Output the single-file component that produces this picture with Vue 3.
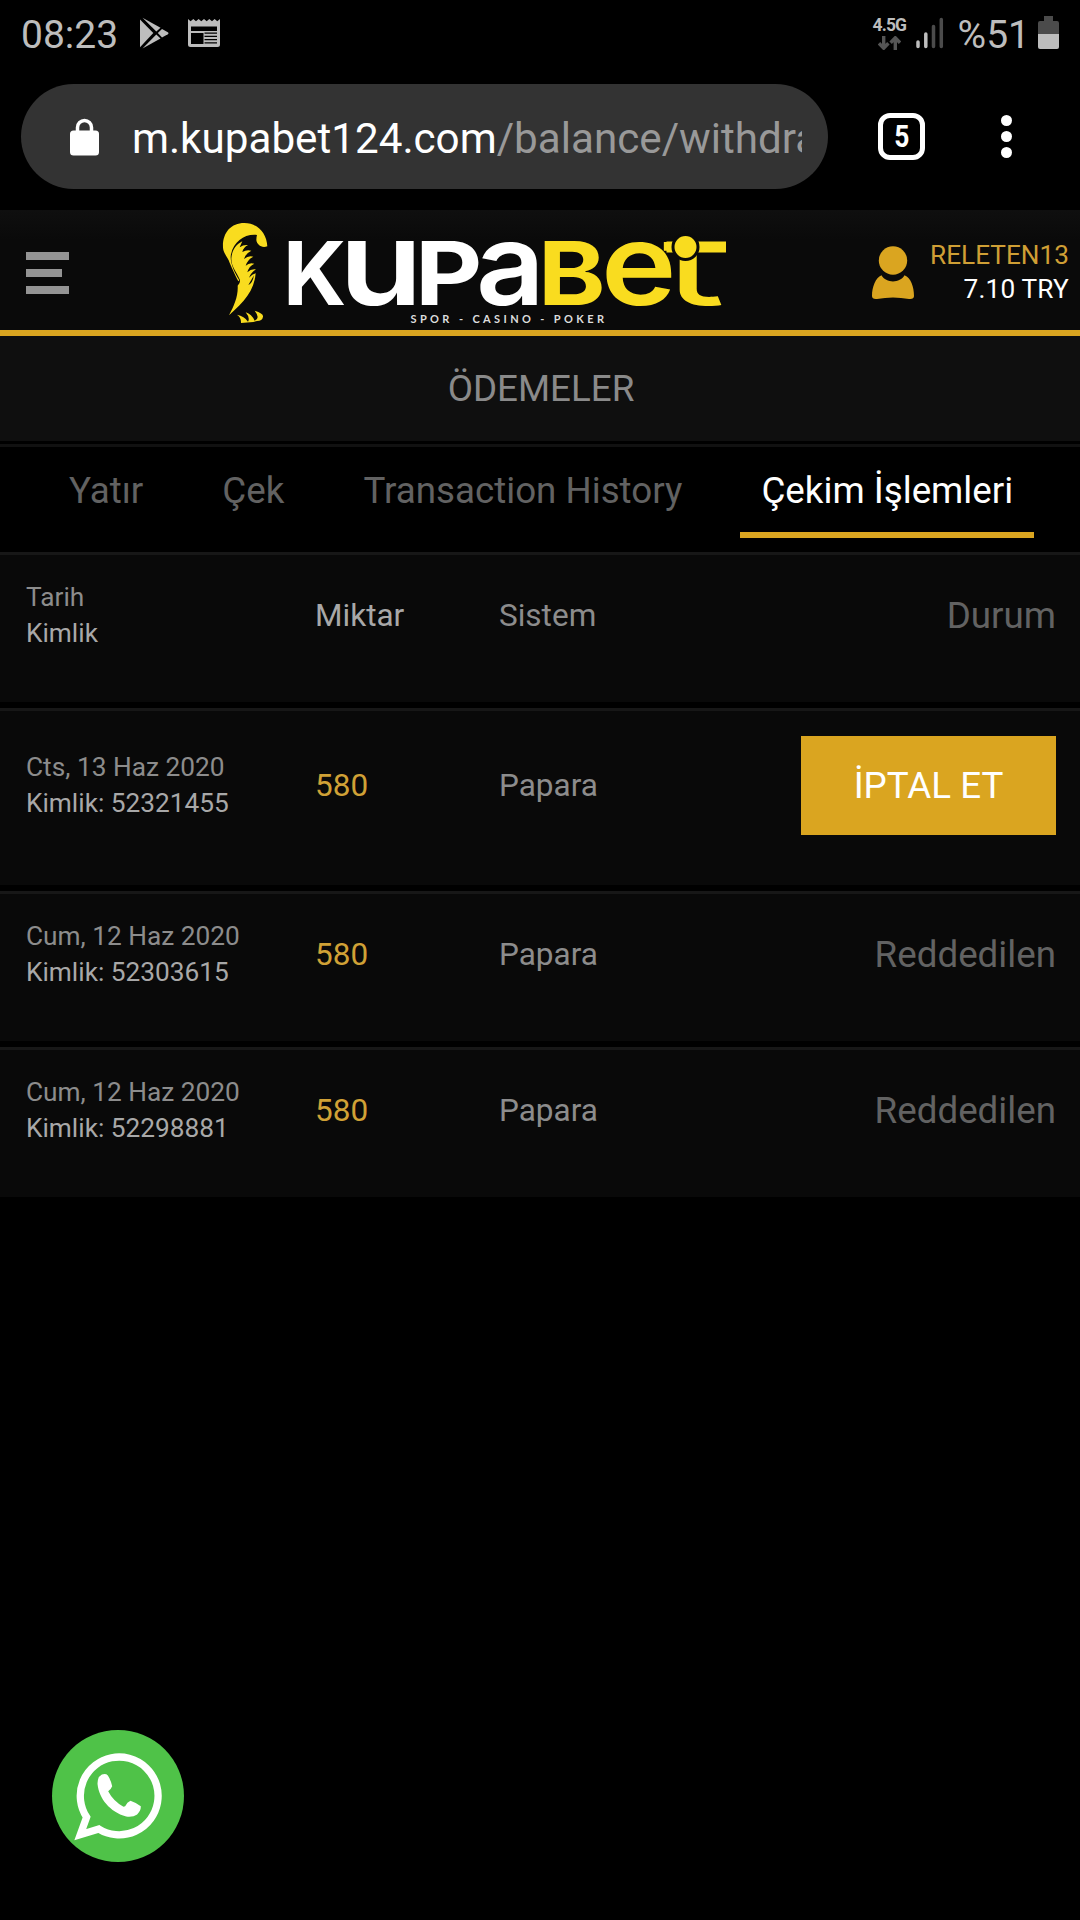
<template>
  <div class="screen">
    <div class="status-bar">
      <span class="clock">08:23</span>
      <svg class="play-icon" viewBox="0 0 29 32" width="29" height="32">
        <path d="M0 2.5 13.3 16 0 30.3Z" />
        <path d="M2.5 0.8 20.5 10.8 16.3 14.4Z" />
        <path d="M2.5 31.6 20.5 21.5 16.3 17.6Z" />
        <path d="M22 12 27.8 15.2Q29.2 16.2 27.8 17.2L22 20.5 17.8 16.1Z" />
      </svg>
      <svg class="news-icon" viewBox="0 0 32 29" width="32" height="29">
        <path
          fill-rule="evenodd"
          d="M0 0 2.6 2.2 5.3 0 8 2.2 10.6 0 13.3 2.2 16 0 18.7 2.2 21.3 0 24 2.2 26.6 0 29.3 2.2 32 0V25.5Q32 28 29.5 28H2.5Q0 28 0 25.5ZM3 7.5V12H29V7.5ZM3 14V25H15.5V14Z"
        />
        <path class="cut" d="M16.5 14.2H29M16.5 17.4H29M16.5 20.6H29M16.5 23.8H29" />
      </svg>
      <div class="status-right">
        <div class="network">
          <span>4.5G</span>
          <svg viewBox="0 0 23 14" width="23" height="14">
            <path d="M5.7 0V12M1 7.3 5.7 12.2 10.4 7.3M17.3 14V2M12.6 6.7 17.3 1.8 22 6.7" />
          </svg>
        </div>
        <svg class="signal" viewBox="0 0 28 32" width="28" height="32">
          <path class="on" d="M2 25V29.5M9.8 17V29.5" />
          <path d="M17.5 9.5V29.5M25.3 2.5V29.5" />
        </svg>
        <span class="percent">%51</span>
        <svg class="battery" viewBox="0 0 21 33" width="21" height="33">
          <path fill="#4b4b4b" d="M6 0H15V5H19Q21 5 21 7V18H0V7Q0 5 2 5H6Z" />
          <path d="M0 18H21V31Q21 33 19 33H2Q0 33 0 31Z" />
        </svg>
      </div>
    </div>

    <div class="browser-bar">
      <div class="url-pill">
        <svg viewBox="0 0 29 38" width="29" height="38">
          <path class="shackle" d="M7.5 14V9.5a7 7 0 0 1 14 0V14" />
          <rect y="12.5" width="29" height="25" rx="3.5" />
        </svg>
        <div class="url">m.kupabet124.com<span>/balance/withdrawals</span></div>
      </div>
      <div class="tab-count"><span>5</span></div>
      <div class="dots"><i></i><i></i><i></i></div>
    </div>

    <header class="header">
      <div class="burger"><i></i><i></i><i></i></div>
      <svg class="logo" viewBox="220 210 510 120" width="510" height="120">
        <defs>
          <clipPath id="wordmark">
            <rect x="270" y="240.5" width="460" height="70" />
          </clipPath>
        </defs>
        <g transform="translate(200 205) scale(.33333)">
          <path
            fill="#f9dc1f"
            d="M69 128C67 84 92 54 133 54C172 54 200 84 202 124C184 130 171 119 169 105Q169 96 171 90C135 86 102 108 93 148C88 170 104 205 118 226L115 229C105 210 91 179 86 166C78 150 70 142 69 128Z"
          />
          <path
            fill="#f9dc1f"
            d="M94 160C96 135 108 119 127 109L119 127Q131 118 144 120Q130 127 127 141Q140 133 154 137Q137 145 132 162Q145 151 160 155Q143 163 137 182Q149 171 163 176Q147 183 142 202Q154 190 168 193Q153 203 147 218Q157 208 167 205C163 257 132 291 87 331C103 302 115 272 113 242Q121 235 120 225C110 201 93 184 94 160Z"
          />
          <path fill="#0a0a0a" d="M162 211L145 240Q158 235 162 211Z" />
          <path
            fill="#f9dc1f"
            d="M111 329Q133 333 144 350Q151 339 137 322Q155 328 164 347Q182 340 164 317Q191 325 189 335Q187 348 171 348L160 351L123 354Q124 338 111 329Z"
          />
        </g>
        <g clip-path="url(#wordmark)">
          <text
            v-for="g in logoGlyphs"
            :key="g.char"
            :class="['glyph', g.tone]"
            :font-size="g.size"
            :font-weight="g.weight"
            :transform="`translate(${g.x} 305) scale(${g.scale} 1)`"
          >{{ g.char }}</text>
        </g>
        <rect class="yellow" x="666.5" y="241.5" width="59.5" height="11" />
        <circle class="ball" cx="685.5" cy="247" r="12.5" />
        <text class="tagline" x="410.5" y="323" textLength="193.5">SPOR - CASINO - POKER</text>
      </svg>
      <div class="account">
        <svg viewBox="0 0 42 54" width="42" height="54">
          <circle cx="21" cy="14.5" r="14.2" />
          <path d="M9.5 29.3C14 37.5 28 37.5 32.5 29.3C39 32 42 41 42 50Q42 53.5 37 53Q21 50 5 53Q0 53.5 0 50C0 41 3.5 32 9.5 29.3Z" />
        </svg>
        <div class="account-text">
          <div class="user">RELETEN13</div>
          <div class="balance">7.10 TRY</div>
        </div>
      </div>
    </header>

    <h1 class="title">ÖDEMELER</h1>

    <nav class="tabs">
      <a
        v-for="tab in tabs"
        :key="tab"
        :class="{ active: tab === activeTab }"
        @click="activeTab = tab"
      >{{ tab }}</a>
    </nav>

    <div class="list">
      <div
        v-for="row in rows"
        :key="row.id"
        :class="['row', { head: row.head, pending: row.pending }]"
      >
        <div class="date">
          {{ row.date }}
          <div class="id">{{ row.id }}</div>
        </div>
        <div class="amount">{{ row.amount }}</div>
        <div class="system">{{ row.system }}</div>
        <div class="state">
          <button v-if="row.pending">İPTAL ET</button>
          <template v-else>{{ row.state }}</template>
        </div>
      </div>
    </div>

    <svg class="whatsapp" viewBox="66 59 397 397" width="132" height="132">
      <circle cx="264.5" cy="257.5" r="198.5" fill="#4fc248" />
      <path
        class="bubble"
        d="M170 321A117 117 0 1 1 207 357L151 374Z"
      />
      <path
        fill="#fff"
        d="M216 193Q228 189 234 196Q244 212 247 228Q243 238 235 243Q249 271 281 290L286 288Q292 276 302 272Q319 278 333 288Q334 302 322 313Q309 322 289 319C240 305 208 266 203 222Q202 200 216 193Z"
      />
    </svg>
  </div>
</template>

<script setup>
import { ref } from 'vue'

/* LOGO LETTERS */
const logoGlyphs = [
  { char: 'K', x: 283, size: 88, weight: 700, scale: 1, tone: 'white' },
  { char: 'u', x: 339, size: 117, weight: 600, scale: 1.17, tone: 'white' },
  { char: 'P', x: 415, size: 88, weight: 700, scale: 1.18, tone: 'white' },
  { char: 'a', x: 476, size: 114, weight: 600, scale: 1.05, tone: 'white' },
  { char: 'B', x: 538, size: 88, weight: 700, scale: 1.16, tone: 'yellow' },
  { char: 'e', x: 601, size: 114, weight: 600, scale: 1.12, tone: 'yellow' },
  { char: 't', x: 662, size: 115, weight: 400, scale: 1.68, tone: 'yellow' },
]

/* TABS */
const tabs = ['Yatır', 'Çek', 'Transaction History', 'Çekim İşlemleri']
const activeTab = ref('Çekim İşlemleri')

/* ROWS */
const rows = [
  { head: true, date: 'Tarih', id: 'Kimlik', amount: 'Miktar', system: 'Sistem', state: 'Durum' },
  { date: 'Cts, 13 Haz 2020', id: 'Kimlik: 52321455', amount: '580', system: 'Papara', pending: true },
  { date: 'Cum, 12 Haz 2020', id: 'Kimlik: 52303615', amount: '580', system: 'Papara', state: 'Reddedilen' },
  { date: 'Cum, 12 Haz 2020', id: 'Kimlik: 52298881', amount: '580', system: 'Papara', state: 'Reddedilen' },
]
</script>

<style>
body {
  background: #000;
}
</style>

<style scoped>
.screen {
  position: relative;
  width: 1080px;
  height: 1920px;
  overflow: hidden;
  background: #000;
  font-family: Roboto, sans-serif;
  white-space: nowrap;
}

svg {
  display: block;
  flex-shrink: 0;
}

/* STATUS BAR */
.status-bar {
  display: flex;
  align-items: flex-start;
  height: 84px;
  padding: 0 21px;
  box-sizing: border-box;
  color: #bdbdbd;
  fill: #bdbdbd;
  font-size: 39px;
  line-height: 46px;
}

.clock,
.percent {
  padding-top: 12px;
}

.play-icon {
  margin: 17px 0 0 22px;
}

.news-icon {
  margin: 19px 0 0 19px;
}

.cut {
  stroke: #000;
  stroke-width: 1.2;
}

.status-right {
  display: flex;
  margin-left: auto;
}

.network {
  width: 34px;
  margin: 15px 9px 0 0;
  font-size: 17.5px;
  font-weight: 700;
  line-height: 20px;
  letter-spacing: -0.9px;
}

.network svg {
  margin: 1px 0 0 5px;
  fill: none;
  stroke: #555;
  stroke-width: 3.4;
}

.signal {
  margin: 17px 14px 0 0;
  fill: none;
  stroke: #4b4b4b;
  stroke-width: 3.5;
  stroke-linecap: round;
}

.signal .on {
  stroke: #bdbdbd;
}

.battery {
  margin: 16px 0 0 8px;
}

/* BROWSER BAR */
.browser-bar {
  display: flex;
  align-items: center;
  height: 105px;
  padding-left: 21px;
  margin-bottom: 21px;
}

.url-pill {
  display: flex;
  align-items: center;
  width: 807px;
  height: 105px;
  padding: 0 26px 0 49px;
  box-sizing: border-box;
  border-radius: 53px;
  background: #333;
}

.url-pill svg {
  fill: #fff;
}

.url-pill .shackle {
  fill: none;
  stroke: #fff;
  stroke-width: 3.5;
}

.url {
  flex: 1;
  margin: 5px 0 0 33px;
  overflow: hidden;
  color: #fff;
  font-size: 42.2px;
  line-height: 52px;
}

.url span {
  color: #999;
}

.tab-count {
  display: flex;
  align-items: center;
  justify-content: center;
  width: 47px;
  height: 47px;
  margin-left: 50px;
  box-sizing: border-box;
  border: 5px solid #fff;
  border-radius: 12px;
  color: #fff;
  font-size: 31px;
  font-weight: 700;
}

.tab-count span {
  transform: scaleX(0.85);
}

.dots {
  display: flex;
  flex-direction: column;
  gap: 5px;
  margin-left: 76px;
}

.dots i {
  width: 11px;
  height: 11px;
  border-radius: 50%;
  background: #fff;
}

/* SITE HEADER */
.header {
  display: flex;
  height: 120px;
  border-bottom: 6px solid #daa520;
  background: linear-gradient(#0f0f0f, #0a0a0a 25%);
}

.burger {
  display: flex;
  flex-direction: column;
  gap: 9px;
  width: 194px;
  padding: 42px 0 0 26px;
}

.burger i {
  width: 43px;
  height: 8px;
  background: #949494;
}

.burger i:nth-child(2) {
  width: 36px;
}

.logo {
  overflow: visible;
}

.glyph {
  font-family: Inter, sans-serif;
}

.white {
  fill: #fff;
}

.yellow {
  fill: #f9dc1f;
}

.ball {
  fill: #f9dc1f;
  stroke: #0a0a0a;
  stroke-width: 3;
}

.tagline {
  fill: #ddd;
  font-family: Lato, sans-serif;
  font-size: 11px;
  font-weight: 700;
}

.account {
  display: flex;
  flex: 1;
  justify-content: space-between;
  padding: 36px 11px 0 142px;
}

.account svg {
  fill: #daa520;
}

.account-text {
  margin-top: -8px;
  color: #fff;
  font-size: 26.2px;
  line-height: 34px;
  text-align: right;
}

.user {
  color: #cf9f35;
}

.balance {
  letter-spacing: 0.2px;
}

/* PAGE TITLE AND TABS */
.title {
  height: 105px;
  margin: 0 0 3px;
  padding-left: 2px;
  background: #0f0f0f;
  color: #8a8a8a;
  font-size: 36.75px;
  font-weight: 400;
  line-height: 106px;
  text-align: center;
}

.tabs {
  display: flex;
  gap: 37px;
  height: 108px;
  padding-left: 48px;
  box-sizing: border-box;
  border-top: 3px solid #111;
}

.tabs a {
  height: 85px;
  padding: 0 21px;
  border-bottom: 6px solid transparent;
  color: #626262;
  font-size: 36.75px;
  line-height: 87px;
}

.tabs .active {
  border-color: #daa520;
  color: #fff;
}

/* WITHDRAWALS */
.list {
  display: flex;
  flex-direction: column;
  gap: 6px;
}

.row {
  display: grid;
  grid-template-columns: 289px 184px 1fr auto;
  height: 150px;
  padding: 24px 24px 0 26px;
  box-sizing: border-box;
  border-top: 3px solid #171717;
  background: #090909;
  color: #8c8c8c;
  font-size: 31.5px;
  line-height: 36px;
}

.row.pending {
  height: 177px;
  padding-top: 38px;
}

.date {
  font-size: 26.25px;
}

.id {
  color: #a8a8a8;
}

.amount,
.system {
  padding-top: 19px;
}

.amount {
  color: #d0a136;
}

.head .amount {
  color: #a8a8a8;
}

.state {
  padding-top: 19px;
  color: #626262;
  font-size: 36.75px;
}

.pending .state {
  margin-top: -13px;
  padding: 0;
}

button {
  width: 255px;
  height: 99px;
  padding: 0;
  border: 0;
  background: #daa520;
  color: #fff;
  font: 36.75px Roboto, sans-serif;
}

/* FLOATING CHAT BUTTON */
.whatsapp {
  position: absolute;
  left: 52px;
  top: 1730px;
}

.bubble {
  fill: none;
  stroke: #fff;
  stroke-width: 22;
}
</style>
